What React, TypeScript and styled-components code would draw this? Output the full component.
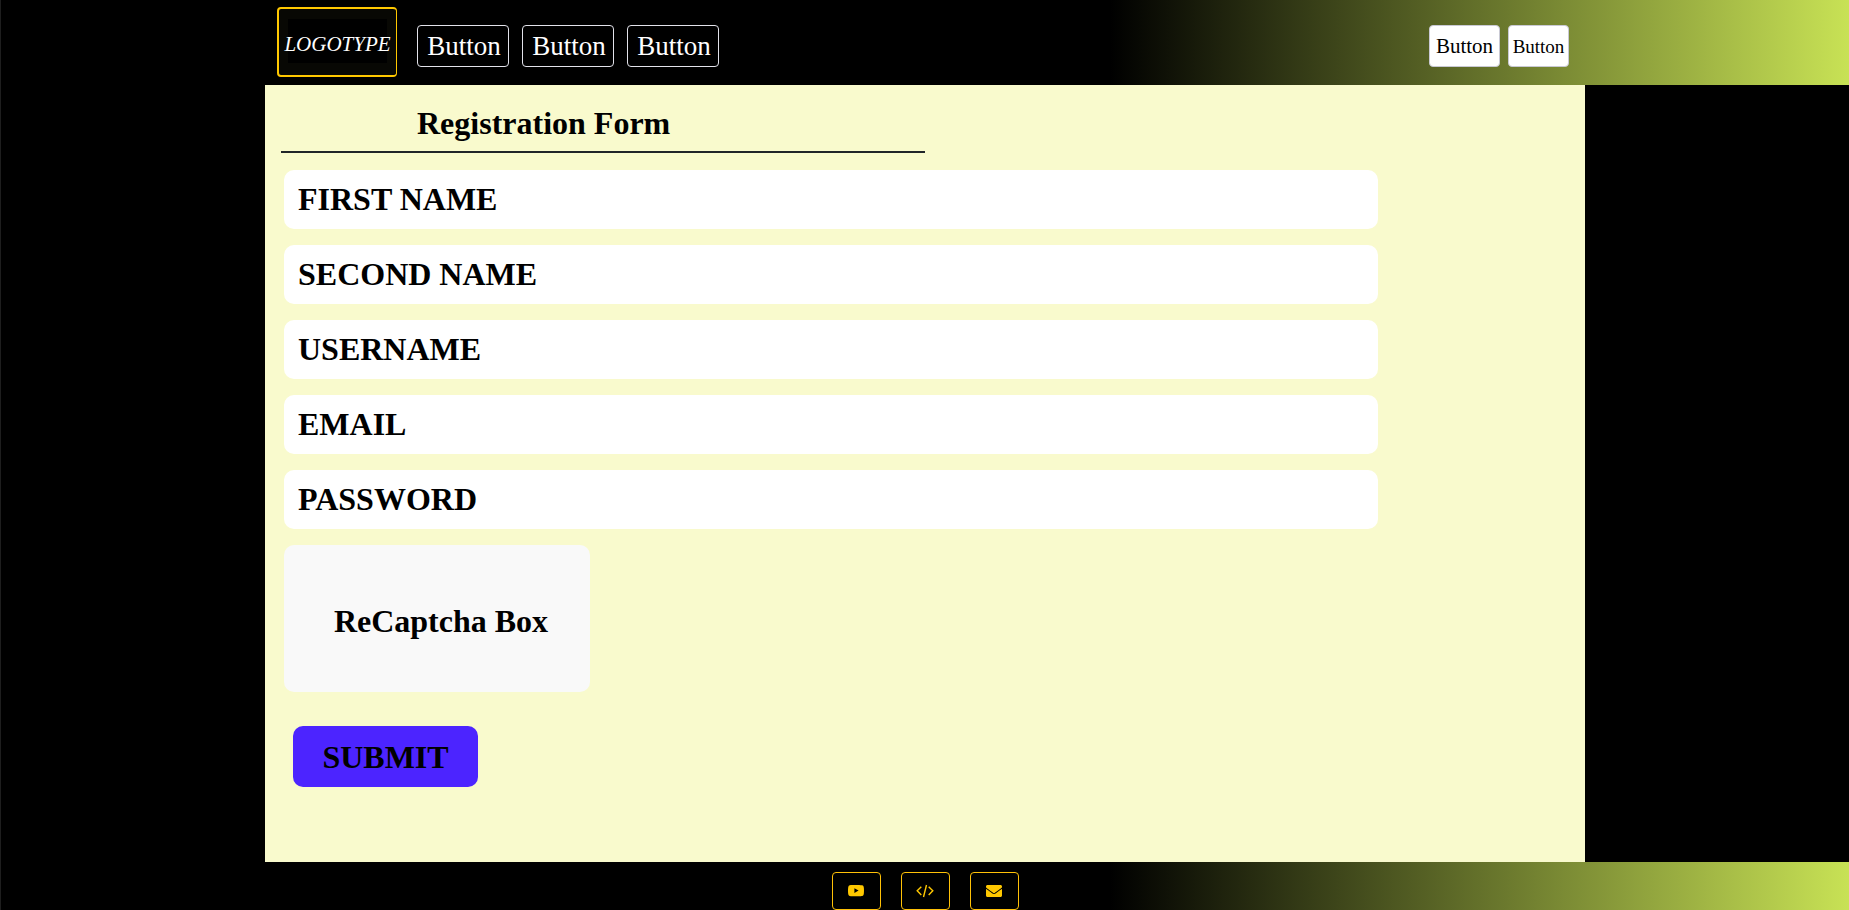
import React from "react";
import styled, { createGlobalStyle } from "styled-components";
import { BsYoutube } from "react-icons/bs";
import { FaEnvelope } from "react-icons/fa";

const GlobalStyle = createGlobalStyle`
  *, *::before, *::after { box-sizing: border-box; }
  body {
    margin: 0;
    background: #000;
    color: #000;
    font-family: "Liberation Serif", "Times New Roman", serif;
  }
  button, input { font-family: inherit; }
`;

const Page = styled.div`
  min-height: 100vh;
  display: flex;
  flex-direction: column;
  border-left: 1px solid #1e1e1e;
`;

const Bar = styled.div`
  background: linear-gradient(to right, #000 60%, #c8e255 100%);
`;

const Container = styled.div`
  width: 100%;
  max-width: 1320px;
  margin: 0 auto;
`;

const HeaderRow = styled(Container)`
  display: flex;
  align-items: flex-start;
  height: 85px;
  padding: 7px 16px 0 12px;
`;

const Logo = styled.a`
  display: block;
  width: 120px;
  height: 70px;
  padding: 10px 9px 12px;
  border: 2px solid #ffc800;
  border-right-width: 1px;
  border-radius: 4px;
  background: #080804;
  text-decoration: none;
`;

const LogoText = styled.span`
  display: flex;
  align-items: center;
  justify-content: center;
  height: 100%;
  padding-top: 6px;
  background: #000;
  color: #fff;
  font-size: 21px;
  font-style: italic;
  white-space: nowrap;
`;

const ButtonGroup = styled.nav<{ $gap: number }>`
  display: flex;
  gap: ${({ $gap }) => $gap}px;
  margin-top: 18px;
`;

const MenuGroup = styled(ButtonGroup)`
  margin-left: 20px;
`;

const AccountGroup = styled(ButtonGroup)`
  margin-left: auto;
`;

const MenuButton = styled.button`
  width: 92px;
  height: 42px;
  padding: 0 0 0 2px;
  border: 1px solid #e2e2ea;
  border-radius: 4px;
  background: transparent;
  color: #fff;
  font-size: 27px;
`;

const AccountButton = styled.button<{ $small?: boolean }>`
  width: ${({ $small }) => ($small ? 61 : 71)}px;
  height: 42px;
  padding: ${({ $small }) => ($small ? 2 : 0)}px 0 0;
  border: 1px solid #c9c9d4;
  border-radius: 4px;
  background: #fff;
  color: #000;
  font-size: ${({ $small }) => ($small ? 19 : 21)}px;
`;

const Main = styled.main`
  flex: 1;
  width: 100%;
  max-width: 1320px;
  margin: 0 auto;
  padding: 20px 16px 75px;
  background: #f9facd;
`;

const Title = styled.h1`
  width: 50%;
  margin: 0;
  padding: 0 0 10px 136px;
  border-bottom: 2px solid #212529;
  font-size: 32px;
  line-height: 36px;
`;

const Form = styled.form`
  display: flex;
  flex-direction: column;
  align-items: flex-start;
  gap: 16px;
  padding: 17px 191px 0 3px;
`;

const Field = styled.input`
  width: 100%;
  height: 59px;
  padding: 0 14px;
  border: 0;
  border-radius: 10px;
  background: #fff;
  color: #000;
  font-size: 32px;
  font-weight: bold;

  &::placeholder {
    color: #000;
    opacity: 1;
  }
`;

const Captcha = styled.div`
  display: flex;
  align-items: center;
  justify-content: center;
  width: 306px;
  height: 147px;
  padding: 6px 0 0 8px;
  border-radius: 10px;
  background: #f9f9f9;
  font-size: 32px;
  font-weight: bold;
`;

const Submit = styled.button`
  width: 185px;
  height: 61px;
  margin: 18px 0 0 9px;
  padding: 2px 0 0;
  border: 0;
  border-radius: 10px;
  background: #4c24ff;
  color: #000;
  font-size: 32px;
  font-weight: bold;
`;

const FooterRow = styled(Container)`
  display: flex;
  justify-content: center;
  gap: 20px;
  padding-top: 10px;
`;

const IconLink = styled.a`
  display: flex;
  align-items: center;
  justify-content: center;
  width: 49px;
  height: 38px;
  border: 1px solid #ffc107;
  border-radius: 4px;
  color: #ffc800;
  font-size: 16px;
`;

const CodeIcon = () => (
  <svg width="18" height="16" viewBox="0 0 18 16" fill="none" stroke="currentColor" strokeWidth="1.4" aria-hidden="true">
    <path d="M5.3 3.7 1.2 7.8l4.1 4.1M10.5 2 7.5 14M12.7 3.7l4.1 4.1-4.1 4.1" />
  </svg>
);

const fields = [
  { name: "firstName", label: "FIRST NAME", type: "text" },
  { name: "secondName", label: "SECOND NAME", type: "text" },
  { name: "username", label: "USERNAME", type: "text" },
  { name: "email", label: "EMAIL", type: "email" },
  { name: "password", label: "PASSWORD", type: "password" },
];

export default function App() {
  return (
    <Page>
      <GlobalStyle />
      <Bar as="header">
        <HeaderRow>
          <Logo href="#">
            <LogoText>LOGOTYPE</LogoText>
          </Logo>
          <MenuGroup $gap={13} aria-label="Main">
            <MenuButton type="button">Button</MenuButton>
            <MenuButton type="button">Button</MenuButton>
            <MenuButton type="button">Button</MenuButton>
          </MenuGroup>
          <AccountGroup $gap={8} aria-label="Account">
            <AccountButton type="button">Button</AccountButton>
            <AccountButton type="button" $small>Button</AccountButton>
          </AccountGroup>
        </HeaderRow>
      </Bar>
      <Main>
        <Title>Registration Form</Title>
        <Form onSubmit={(e) => e.preventDefault()}>
          {fields.map((f) => (
            <Field key={f.name} name={f.name} type={f.type} placeholder={f.label} aria-label={f.label} />
          ))}
          <Captcha>ReCaptcha Box</Captcha>
          <Submit type="submit">SUBMIT</Submit>
        </Form>
      </Main>
      <Bar as="footer">
        <FooterRow>
          <IconLink href="#" aria-label="YouTube"><BsYoutube /></IconLink>
          <IconLink href="#" aria-label="Source code"><CodeIcon /></IconLink>
          <IconLink href="#" aria-label="Email"><FaEnvelope /></IconLink>
        </FooterRow>
      </Bar>
    </Page>
  );
}
